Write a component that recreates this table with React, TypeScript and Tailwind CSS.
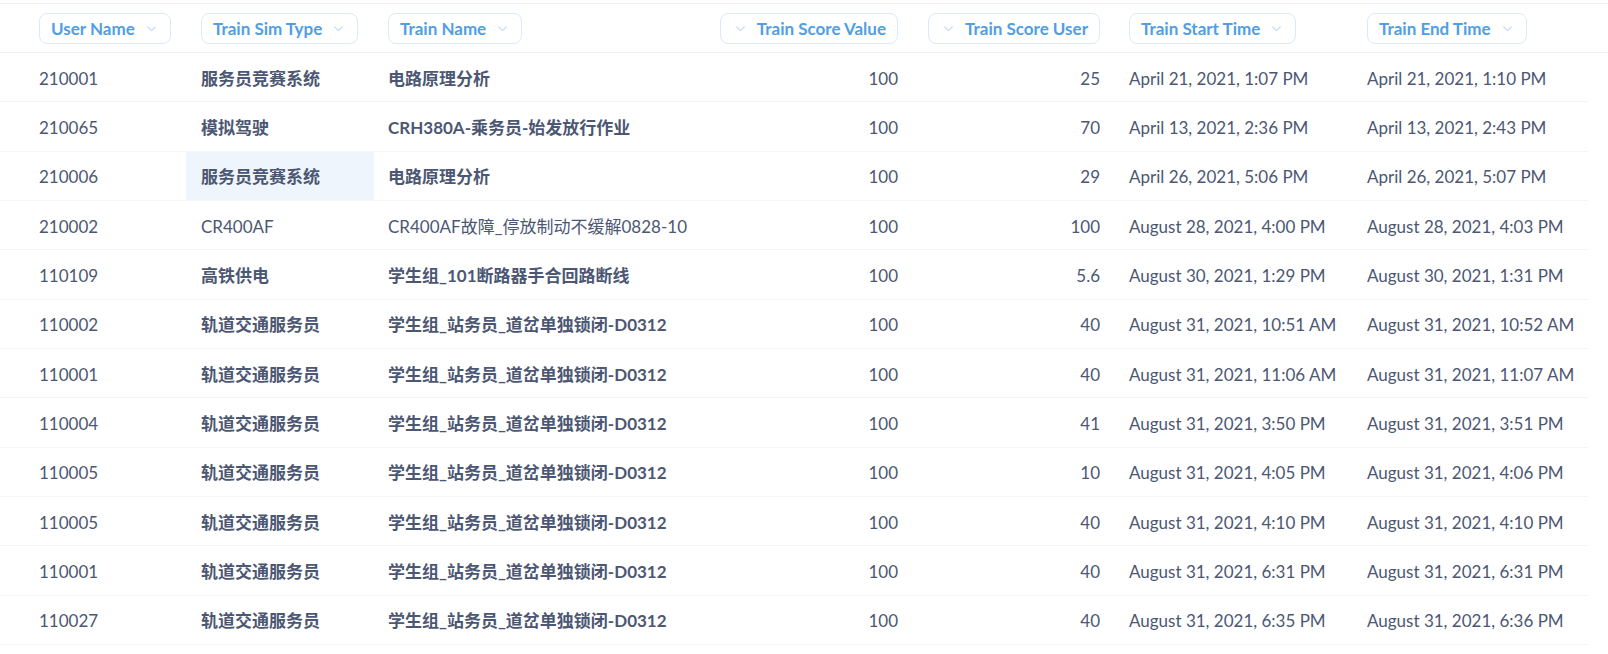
import React from "react";

type Row = {
  user: string;
  sim: string;
  name: string;
  value: string;
  score: string;
  start: string;
  end: string;
  simBold?: boolean;
  nameBold?: boolean;
  hl?: boolean;
};

const rows: Row[] = [
  { user: "210001", sim: "服务员竞赛系统", name: "电路原理分析", value: "100", score: "25", start: "April 21, 2021, 1:07 PM", end: "April 21, 2021, 1:10 PM" },
  { user: "210065", sim: "模拟驾驶", name: "CRH380A-乘务员-始发放行作业", value: "100", score: "70", start: "April 13, 2021, 2:36 PM", end: "April 13, 2021, 2:43 PM" },
  { user: "210006", sim: "服务员竞赛系统", name: "电路原理分析", value: "100", score: "29", start: "April 26, 2021, 5:06 PM", end: "April 26, 2021, 5:07 PM", hl: true },
  { user: "210002", sim: "CR400AF", name: "CR400AF故障_停放制动不缓解0828-10", value: "100", score: "100", start: "August 28, 2021, 4:00 PM", end: "August 28, 2021, 4:03 PM", simBold: false, nameBold: false },
  { user: "110109", sim: "高铁供电", name: "学生组_101断路器手合回路断线", value: "100", score: "5.6", start: "August 30, 2021, 1:29 PM", end: "August 30, 2021, 1:31 PM" },
  { user: "110002", sim: "轨道交通服务员", name: "学生组_站务员_道岔单独锁闭-D0312", value: "100", score: "40", start: "August 31, 2021, 10:51 AM", end: "August 31, 2021, 10:52 AM" },
  { user: "110001", sim: "轨道交通服务员", name: "学生组_站务员_道岔单独锁闭-D0312", value: "100", score: "40", start: "August 31, 2021, 11:06 AM", end: "August 31, 2021, 11:07 AM" },
  { user: "110004", sim: "轨道交通服务员", name: "学生组_站务员_道岔单独锁闭-D0312", value: "100", score: "41", start: "August 31, 2021, 3:50 PM", end: "August 31, 2021, 3:51 PM" },
  { user: "110005", sim: "轨道交通服务员", name: "学生组_站务员_道岔单独锁闭-D0312", value: "100", score: "10", start: "August 31, 2021, 4:05 PM", end: "August 31, 2021, 4:06 PM" },
  { user: "110005", sim: "轨道交通服务员", name: "学生组_站务员_道岔单独锁闭-D0312", value: "100", score: "40", start: "August 31, 2021, 4:10 PM", end: "August 31, 2021, 4:10 PM" },
  { user: "110001", sim: "轨道交通服务员", name: "学生组_站务员_道岔单独锁闭-D0312", value: "100", score: "40", start: "August 31, 2021, 6:31 PM", end: "August 31, 2021, 6:31 PM" },
  { user: "110027", sim: "轨道交通服务员", name: "学生组_站务员_道岔单独锁闭-D0312", value: "100", score: "40", start: "August 31, 2021, 6:35 PM", end: "August 31, 2021, 6:36 PM" },
];

const Chevron = () => (
  <svg width="9" height="6" viewBox="0 0 9 6" fill="none" className="shrink-0">
    <path d="M0.8 1l3.7 3.7L8.2 1" stroke="#c7ddf3" strokeWidth="1.2" strokeLinecap="round" strokeLinejoin="round" />
  </svg>
);

const Pill = ({ label, left = false }: { label: string; left?: boolean }) => (
  <div className="mt-[1px] flex h-[31px] items-center rounded-[8px] border border-[#dbe9f8] bg-white text-[17px] font-bold text-[#509ee3]">
    {left ? (
      <div className="flex items-center gap-[12px] pl-[15px] pr-[11px] pt-[1px]">
        <Chevron />
        <span>{label}</span>
      </div>
    ) : (
      <div className="flex items-center gap-[12px] pl-[11px] pr-[14px] pt-[1px]">
        <span>{label}</span>
        <Chevron />
      </div>
    )}
  </div>
);

export default function App() {
  return (
    <div
      className="min-h-[654px] w-[1608px] bg-white pt-[3px] text-[#4c5773]"
      style={{ fontFamily: 'Lato, "Noto Sans CJK SC", sans-serif' }}
    >
      <div className="flex h-[50px] items-center border-y border-[#eef0f2]">
        <div className="w-[186px] pl-[39px]"><div className="inline-flex"><Pill label="User Name" /></div></div>
        <div className="w-[188px] pl-[15px]"><div className="inline-flex"><Pill label="Train Sim Type" /></div></div>
        <div className="w-[329px] pl-[14px]"><div className="inline-flex"><Pill label="Train Name" /></div></div>
        <div className="flex w-[209px] justify-end pr-[14px]"><Pill label="Train Score Value" left /></div>
        <div className="flex w-[202px] justify-end pr-[14px]"><Pill label="Train Score User" left /></div>
        <div className="w-[238px] pl-[15px]"><div className="inline-flex"><Pill label="Train Start Time" /></div></div>
        <div className="w-[236px] pl-[15px]"><div className="inline-flex"><Pill label="Train End Time" /></div></div>
      </div>
      <div className="w-[1588px]">
        {rows.map((r, i) => (
          <div key={i} className="flex h-[49.33px] border-b border-[#f3f4f6] pt-[2px] text-[17px] leading-none">
            <div className="flex w-[186px] items-center pl-[39px]">{r.user}</div>
            <div className={`-mt-[2px] flex w-[188px] items-center pl-[15px] pt-[2px] ${r.simBold === false ? "font-normal" : "font-bold"} ${r.hl ? "bg-[#eef5fc]" : ""}`}>{r.sim}</div>
            <div className={`flex w-[329px] items-center whitespace-nowrap pl-[14px] ${r.nameBold === false ? "font-normal" : "font-bold"}`}>{r.name}</div>
            <div className="flex w-[209px] items-center justify-end pr-[14px]">{r.value}</div>
            <div className="flex w-[202px] items-center justify-end pr-[14px]">{r.score}</div>
            <div className="flex w-[238px] items-center whitespace-nowrap pl-[15px]">{r.start}</div>
            <div className="flex w-[236px] items-center whitespace-nowrap pl-[15px]">{r.end}</div>
          </div>
        ))}
      </div>
    </div>
  );
}
